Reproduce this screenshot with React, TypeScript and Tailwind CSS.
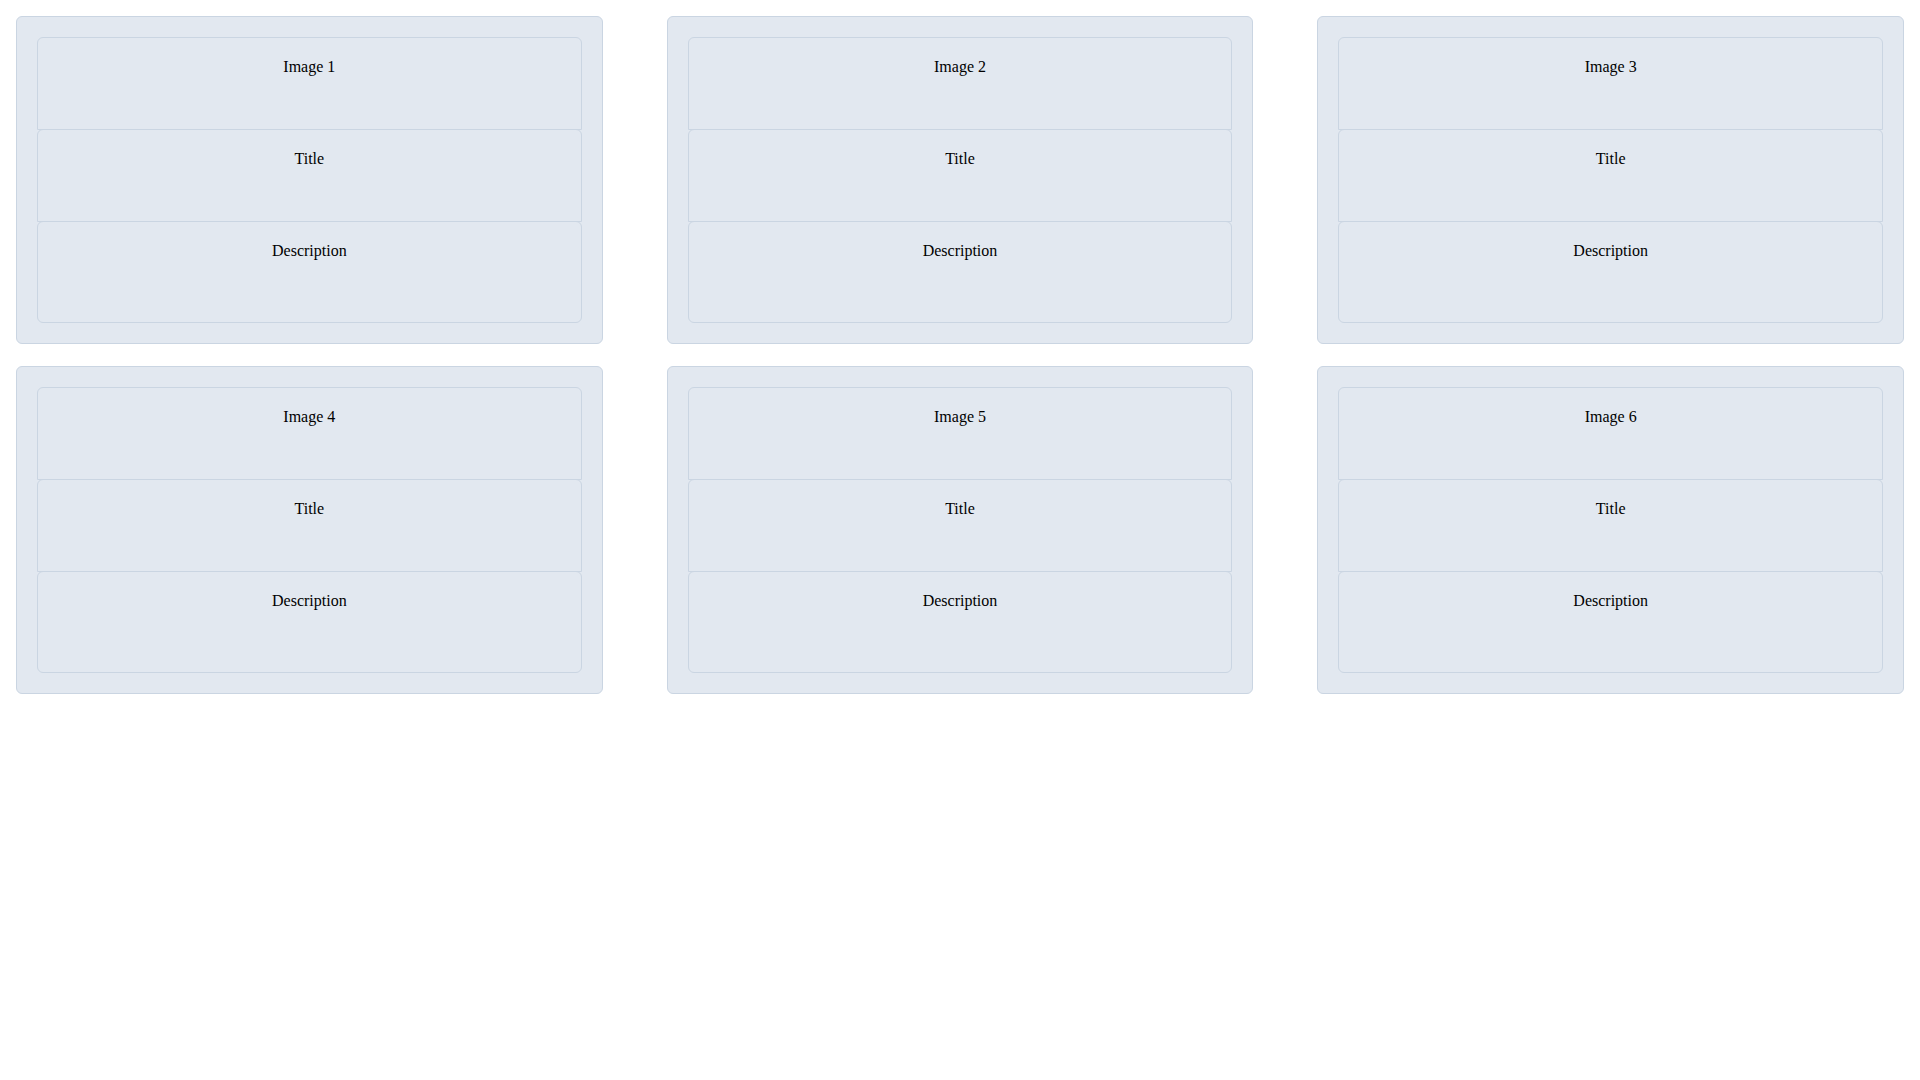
const cards = [1, 2, 3, 4, 5, 6];

function Card({ n }: { n: number }) {
  return (
    <div className="rounded-md border border-slate-300 bg-slate-200 p-5">
      <div className="flex flex-col">
        <div className="h-[93px] rounded-t-md border border-slate-300 bg-slate-200 px-4 pt-[17px] text-center leading-6">
          Image {n}
        </div>
        <div className="-mt-px h-[93px] rounded-t-md border border-slate-300 bg-slate-200 px-4 pt-[17px] text-center leading-6">
          Title
        </div>
        <div className="-mt-px h-[102px] rounded-md border border-slate-300 bg-slate-200 px-4 pt-[17px] text-center leading-6">
          Description
        </div>
      </div>
    </div>
  );
}

export default function App() {
  return (
    <div className="min-h-screen bg-white p-4 font-['Liberation_Serif',serif] text-base text-black">
      <div className="grid grid-cols-3 gap-x-16 gap-y-[22px]">
        {cards.map((n) => (
          <Card key={n} n={n} />
        ))}
      </div>
    </div>
  );
}
